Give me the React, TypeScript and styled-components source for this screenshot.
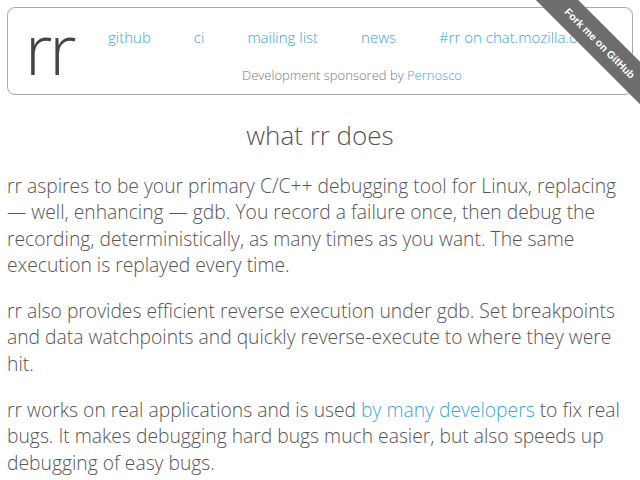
import styled, { createGlobalStyle } from "styled-components";

const GlobalStyle = createGlobalStyle`
  body {
    margin: 0;
    font-family: "Open Sans", "Liberation Sans", sans-serif;
    font-weight: 300;
    color: #555;
    background: #fff;
  }
  a {
    color: #3aa6dc;
    text-decoration: none;
  }
`;

const links = ["github", "ci", "mailing list", "news", "#rr on chat.mozilla.org"];

const App = () => {
  return (
    <Page>
      <GlobalStyle />
      <Header>
        <Logo>rr</Logo>
        <NavColumn>
          <NavLinks>
            {links.map((l, i) => (
              <a href="#" key={i}>
                {l}
              </a>
            ))}
          </NavLinks>
          <Sponsor>
            Development sponsored by <a href="#">Pernosco</a>
          </Sponsor>
        </NavColumn>
      </Header>
      <Title>what rr does</Title>
      <Para>
        rr aspires to be your primary C/C++ debugging tool for Linux, replacing
        — well, enhancing — gdb. You record a failure once, then debug the
        recording, deterministically, as many times as you want. The same
        execution is replayed every time.
      </Para>
      <Para>
        rr also provides efficient reverse execution under gdb. Set breakpoints
        and data watchpoints and quickly reverse-execute to where they were
        hit.
      </Para>
      <Para>
        rr works on real applications and is used{" "}
        <a href="#">by many developers</a> to fix real bugs. It makes debugging
        hard bugs much easier, but also speeds up debugging of easy bugs.
      </Para>
      <Ribbon>
        <RibbonBand href="#">Fork me on GitHub</RibbonBand>
      </Ribbon>
    </Page>
  );
};

const Page = styled.div`
  padding: 7px;
`;

const Header = styled.div`
  display: flex;
  height: 86px;
  border: 1px solid #aaa;
  border-radius: 8px;
  overflow: hidden;
`;

const Logo = styled.div`
  font-size: 70px;
  line-height: 72px;
  letter-spacing: -3px;
  padding: 4px 0 0 17px;
  color: #444;
  width: 83px;
`;

const NavColumn = styled.div`
  flex: 1;
  display: flex;
  flex-direction: column;
  min-width: 0;
`;

const NavLinks = styled.div`
  display: flex;
  gap: 43px;
  padding: 19px 0 0 0;
  font-size: 15px;
  line-height: 20px;
  white-space: nowrap;
`;

const Sponsor = styled.div`
  margin-top: 19px;
  padding-right: 36px;
  font-size: 13px;
  line-height: 18px;
  text-align: center;
  color: #777;
`;

const Title = styled.h1`
  margin: 22px 0 0;
  font-size: 26px;
  font-weight: 300;
  line-height: 36px;
  text-align: center;
`;

const Para = styled.p`
  margin: 20px 0 0;
  font-size: 19.3px;
  line-height: 26.3px;
`;

const Ribbon = styled.div`
  position: absolute;
  top: 0;
  right: 0;
  width: 149px;
  height: 149px;
  overflow: hidden;
`;

const RibbonBand = styled.a`
  position: absolute;
  left: -1px;
  top: 28px;
  width: 220px;
  height: 30px;
  line-height: 30px;
  background: #6d6d6d;
  color: #fff !important;
  font-family: "Liberation Sans", Arial, sans-serif;
  font-weight: bold;
  font-size: 10.5px;
  text-align: center;
  transform: rotate(45deg);
`;

export default App;
